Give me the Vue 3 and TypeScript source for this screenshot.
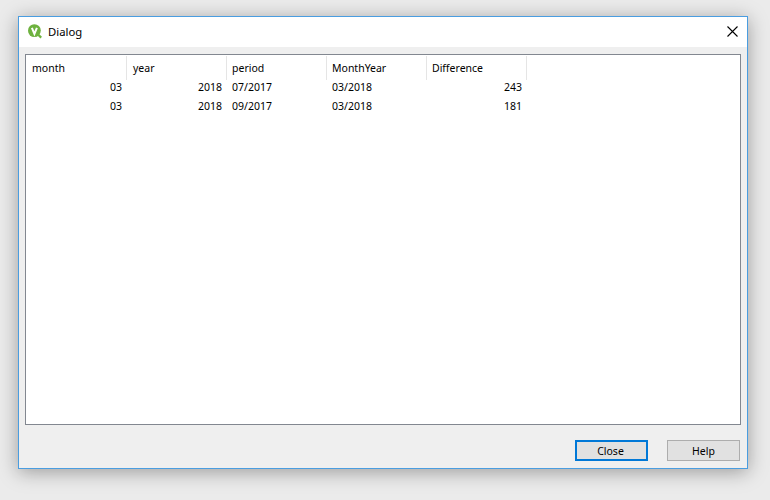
<script setup lang="ts">
interface Row { month: string; year: string; period: string; monthYear: string; difference: string }
const rows: Row[] = [
  { month: '03', year: '2018', period: '07/2017', monthYear: '03/2018', difference: '243' },
  { month: '03', year: '2018', period: '09/2017', monthYear: '03/2018', difference: '181' },
]
const headers = ['month', 'year', 'period', 'MonthYear', 'Difference']
</script>

<template>
  <div class="desktop">
    <div class="window">
      <div class="titlebar">
        <div class="title-left">
          <svg class="logo" width="16" height="16" viewBox="0 0 16 16">
            <circle cx="6.4" cy="6.6" r="6.4" fill="#6eb23f" />
            <path d="M9.5 10 L13.2 13.6" stroke="#6eb23f" stroke-width="2.2" fill="none" />
            <path d="M3.9 3.8 L6.4 9.8 L8.9 3.8" stroke="#fff" stroke-width="2" fill="none" />
          </svg>
          <span class="title">Dialog</span>
        </div>
        <svg class="close-x" width="11" height="11" viewBox="0 0 11 11">
          <path d="M0.5 0.5 L10.5 10.5 M10.5 0.5 L0.5 10.5" stroke="#000" stroke-width="1.1" fill="none" />
        </svg>
      </div>
      <div class="body">
        <div class="table-box">
          <div class="grid">
            <div v-for="h in headers" :key="h" class="head">{{ h }}</div>
            <template v-for="(r, i) in rows" :key="i">
              <div class="cell num">{{ r.month }}</div>
              <div class="cell num">{{ r.year }}</div>
              <div class="cell">{{ r.period }}</div>
              <div class="cell">{{ r.monthYear }}</div>
              <div class="cell num">{{ r.difference }}</div>
            </template>
          </div>
        </div>
        <div class="buttons">
          <button class="btn focused">Close</button>
          <button class="btn">Help</button>
        </div>
      </div>
    </div>
  </div>
</template>

<style>
html, body { margin: 0; background: #ebebeb; }
</style>

<style scoped>
.desktop {
  width: 770px;
  height: 500px;
  box-sizing: border-box;
  padding: 16px 0 0 18px;
  background: #ebebeb;
  overflow: hidden;
  font-family: "Noto Sans", "Open Sans", sans-serif;
  font-size: 10.5px;
  color: #000;
}
.window {
  width: 730px;
  height: 453px;
  box-sizing: border-box;
  border: 1px solid #4a9de0;
  background: #efefef;
  display: flex;
  flex-direction: column;
  box-shadow: 0 3px 18px rgba(0, 0, 0, 0.34);
}
.titlebar {
  height: 30px;
  background: #fff;
  display: flex;
  align-items: center;
  justify-content: space-between;
  padding: 0 9px;
  flex: none;
}
.title-left { display: flex; align-items: center; gap: 4px; }
.logo { display: block; }
.title { font-size: 11.3px; padding-bottom: 2px; }
.close-x { display: block; margin-bottom: 1px; }
.body {
  flex: 1;
  display: flex;
  flex-direction: column;
  padding: 7px 6px 6px 6px;
  min-height: 0;
}
.table-box {
  height: 371px;
  box-sizing: border-box;
  border: 1px solid #828790;
  background: #fff;
  flex: none;
}
.grid {
  display: grid;
  grid-template-columns: 101px repeat(4, 100px);
  grid-template-rows: 23px;
  grid-auto-rows: 19px;
  width: 501px;
}
.head {
  height: 24px;
  margin-top: 1px;
  box-sizing: border-box;
  padding: 0 5px;
  line-height: 25px;
  border-right: 1px solid #e5e5e5;
}
.head:nth-child(-n + 2) { padding-left: 6px; }
.cell {
  line-height: 19px;
  padding: 0 5px;
  white-space: nowrap;
}
.num { text-align: right; }
.buttons {
  display: flex;
  justify-content: flex-end;
  gap: 19px;
  margin-top: 15px;
  margin-right: 1px;
}
.btn {
  width: 73px;
  height: 21px;
  box-sizing: border-box;
  border: 1px solid #adadad;
  background: #e1e1e1;
  font: inherit;
  color: #000;
  padding: 0;
}
.focused { border: 2px solid #0078d7; padding-right: 2px; }
</style>
